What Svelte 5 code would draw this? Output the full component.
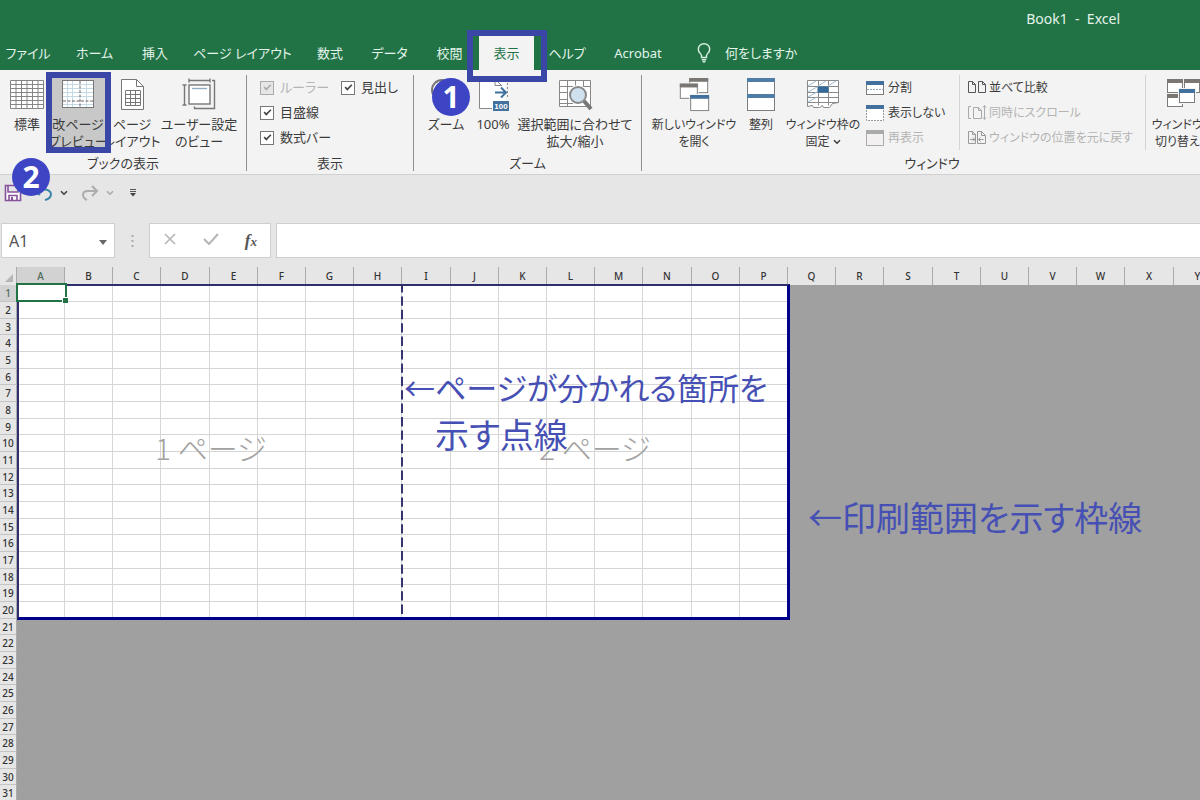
<script>
  const tabs = ['ファイル', 'ホーム', '挿入', 'ページ レイアウト', '数式', 'データ', '校閲', '表示', 'ヘルプ', 'Acrobat'];
  const columns = 'ABCDEFGHIJKLMNOPQRSTUVWXY'.split('');
  const rows = Array.from({ length: 31 }, (_, i) => i + 1);
  let active = $state('表示');
</script>

{#snippet win(x, y, w, h, bar)}
  <rect x={x + 0.5} y={y + 0.5} width={w - 1} height={h - 1} fill="#fff" stroke="#7c7c7c" />
  <rect {x} {y} width={w} height="4" fill={bar} />
{/snippet}

{#snippet chevron()}
  <svg class="chevron" width="8" height="6" viewBox="0 0 8 6" aria-hidden="true"><path d="M1 1.2 4 4.2 7 1.2" fill="none" stroke="currentColor" stroke-width="1.5" /></svg>
{/snippet}

<div class="excel">
  <header>
    <div class="title">Book1&nbsp; -&nbsp; Excel</div>
    <nav>
      {#each tabs as tab}
        <button class:active={tab === active} onclick={() => (active = tab)}>{tab}</button>
      {/each}
      <button class="tell">
        <svg width="14" height="20" viewBox="0 0 14 20" fill="none" stroke="#d9f0e2" stroke-width="1.4" aria-hidden="true">
          <path d="M4.5 14.5V12.6C4.5 10.8 1.3 9.500 1.3 6.400a5.700 5.700 0 0 1 11.400 0c0 3.100-3.200 4.400-3.200 6.200v1.900zM4.800 16.800h4.400M5.600 18.800h2.800" />
        </svg>
        何をしますか
      </button>
    </nav>
    <div class="mark tab-mark"></div>
  </header>

  <section class="ribbon">
    <div class="group book">
      <div class="tools">
        <button>
          <svg width="34" height="34" viewBox="0 0 34 34" aria-hidden="true">
            <rect x="1" y="2.500" width="32" height="28" fill="#fff" />
            <path d="M.5 2.500h33v28H.5zM6 2.500v28M11.500 2.500v28M17 2.500v28M22.500 2.500v28M28 2.500v28M.5 6.500h33M.5 10.500h33M.5 14.500h33M.5 18.500h33M.5 22.500h33M.5 26.500h33" fill="none" stroke="#858585" />
          </svg>
          <span>標準</span>
        </button>
        <button class="on">
          <svg width="34" height="34" viewBox="0 0 34 34" aria-hidden="true">
            <rect x="1.500" y="2.500" width="31" height="27" fill="#fff" />
            <path d="M6.500 3v26M11.500 3v26M25.500 3v26M2 6.500h30M2 10.500h30M2 14.500h30M2 18.500h30M2 26.500h30" fill="none" stroke="#c3d9e6" />
            <rect x="1.500" y="2.500" width="31" height="27" fill="none" stroke="#777" />
            <path d="M19 3v27M2 23h31" fill="none" stroke="#666" stroke-dasharray="3 1.500" />
          </svg>
          <span>改ページ<br />プレビュー</span>
        </button>
        <button>
          <svg width="34" height="34" viewBox="0 0 34 34" fill="none" stroke="#777" aria-hidden="true">
            <path d="M6.500 1.500h15l7 7v23h-22z" fill="#fff" />
            <path d="M21.500 1.500v7h7M10.500 12.500h15v15h-15zM15.500 12.500v15M20.500 12.500v15M10.500 16.500h15M10.500 20.500h15M10.500 24.500h15" />
          </svg>
          <span>ページ<br />レイアウト</span>
        </button>
        <button>
          <svg width="34" height="34" viewBox="0 0 34 34" fill="none" stroke="#777" stroke-width="1.400" aria-hidden="true">
            <path d="M7 2.500h21M7 .5v4M28 .5v4M2.500 7v20M.5 7h4M.5 27h4M30 2.500h2.500v28h-20V28.500" />
            <rect x="7" y="7" width="21" height="19" fill="#fff" />
            <path d="M10 10.500h15" stroke="#91acc0" />
          </svg>
          <span>ユーザー設定<br />のビュー</span>
        </button>
      </div>
      <div class="caption">ブックの表示</div>
      <div class="mark tool-mark"></div>
      <div class="badge second">2</div>
    </div>

    <div class="group show">
      <div class="checks">
        <label class="off"><input type="checkbox" checked disabled />ルーラー</label>
        <label><input type="checkbox" checked />見出し</label>
        <label><input type="checkbox" checked />目盛線</label>
        <label class="next"><input type="checkbox" checked />数式バー</label>
      </div>
      <div class="caption">表示</div>
    </div>

    <div class="group zoom">
      <div class="tools">
        <button>
          <svg width="34" height="34" viewBox="0 0 34 34" fill="none" aria-hidden="true">
            <circle cx="13" cy="12" r="10" fill="#fff" stroke="#777" stroke-width="2" /><path d="m20 19 7 9" stroke="#777" stroke-width="3" />
          </svg>
          <span>ズーム</span>
        </button>
        <button>
          <svg width="34" height="34" viewBox="0 0 34 34" fill="none" aria-hidden="true">
            <path d="M3.500 1.500h26v29h-26z" fill="#fff" />
            <path d="M3.500 1v29.500H16M19 1.500v6h7M20 2l5 5" stroke="#888" />
            <path d="M31.500 1v19" stroke="#888" stroke-dasharray="2 2" />
            <path d="M19 14.500h10M25 9.500l5 5-5 5" stroke="#3f719d" stroke-width="2" />
            <rect x="17" y="23" width="16" height="10" fill="#41719c" />
            <text x="25" y="31" text-anchor="middle" class="tiny">100</text>
          </svg>
          <span>100%</span>
        </button>
        <button>
          <svg width="36" height="34" viewBox="0 0 36 34" fill="none" aria-hidden="true">
            <path d="M2.500 2.500h31v26h-31z" fill="#fff" />
            <path d="M2.500 2.500h31v26h-31zM10.500 2.500v26M18.500 2.500v6M26.500 2.500v6M2.500 8.500h31M2.500 14.500h8M2.500 21.500h8M2.500 25.500h14" stroke="#888" />
            <circle cx="21" cy="17" r="10" fill="#fff" />
            <path d="m27 23 7 8" stroke="#777" stroke-width="4" />
            <circle cx="21" cy="17" r="8" fill="#cfe0ef" stroke="#888" stroke-width="2" />
          </svg>
          <span>選択範囲に合わせて<br />拡大/縮小</span>
        </button>
      </div>
      <div class="caption">ズーム</div>
      <div class="badge first">1</div>
    </div>

    <div class="group window">
      <div class="tools">
        <button>
          <svg width="34" height="36" viewBox="0 0 34 36" aria-hidden="true">
            {@render win(12, 0, 20, 16, '#7a7672')}
            <rect x="1" y="5" width="21" height="18" fill="#f3f3f3" />
            {@render win(2, 6, 19, 16, '#7a7672')}
            <rect x="12" y="17" width="22" height="19" fill="#f3f3f3" />
            {@render win(13, 18, 20, 17, '#41719c')}
          </svg>
          <span>新しいウィンドウ<br />を開く</span>
        </button>
        <button>
          <svg width="28" height="34" viewBox="0 0 28 34" aria-hidden="true">
            {@render win(0, 0, 28, 17, '#4f7da8')}
            {@render win(0, 16, 28, 17, '#4f7da8')}
          </svg>
          <span>整列</span>
        </button>
        <button>
          <svg width="34" height="34" viewBox="0 0 34 34" fill="none" stroke="#8a8a8a" aria-hidden="true">
            <path d="M1.500 2.500h31v22l-6 1-3 4h-6l-1-2-3 2h-6l-1-2-5 1z" fill="#fff" />
            <path d="M12.500 2.500v25M22.500 2.500v25M1.500 8.500h31M1.500 14.500h31M1.500 19.500h31M1.500 24.500h31" />
            <path d="m2 8 8-5M12 8l8-5M22 8l8-5M2 14l9-5M2 19l9-5M2 24l9-5" stroke="#9dbad1" />
            <path d="M12 9h10v5H12z" fill="#356a9b" stroke="#356a9b" />
          </svg>
          <span>ウィンドウ枠の<br />固定 {@render chevron()}</span>
        </button>
        <div class="list panes">
          <button>
            <svg width="18" height="16" viewBox="0 0 18 16" aria-hidden="true">{@render win(0, 1, 18, 14, '#41719c')}<path d="M1 9.500h16" stroke="#8fabc3" stroke-dasharray="2 1" /></svg>分割
          </button>
          <button>
            <svg width="18" height="16" viewBox="0 0 18 16" aria-hidden="true"><path d="M.5 2v13.500h17V2" fill="#fff" stroke="#999" stroke-dasharray="2 1" /><path d="M0 0h18v4H0z" fill="#41719c" /></svg>表示しない
          </button>
          <button disabled>
            <svg width="18" height="16" viewBox="0 0 18 16" aria-hidden="true"><path d="M.5 1.500h17v14H.5z" fill="#f3f0f1" stroke="#aaa" /><path d="M0 0h18v4H0z" fill="#aaa" /></svg>再表示
          </button>
        </div>
        <div class="list compare">
          <button>
            <svg width="20" height="16" viewBox="0 0 20 16" fill="none" stroke="#555" aria-hidden="true"><path d="M3 1.500H1.500v11h7v-8l-3-3H3M5.500 1.500v3h3M11.500 1.500h4l3 3v8h-7zM15.500 1.500v3h3" /></svg>並べて比較
          </button>
          <button disabled>
            <svg width="20" height="16" viewBox="0 0 20 16" fill="none" stroke="#aaa" aria-hidden="true"><path d="M4 1.500H1.500v12H4M6.500 2.500h5l3 3v8h-8zM11.500 2.500v3h3M17.500 1v13M16 2.500l1.500-2 1.500 2M16 12.500l1.500 2 1.500-2" /></svg>同時にスクロール
          </button>
          <button disabled>
            <svg width="20" height="16" viewBox="0 0 20 16" fill="none" stroke="#999" aria-hidden="true"><path d="M1.500 1.500h4l3 3v9h-7zM5.500 1.500v3h3M10.500 1.500h4l4 4v8h-8zM14.500 1.500v4h4M3 9.500h5M6 7.500l2 2-2 2M11.500 9.500h5M13.500 7.500l-2 2 2 2" /></svg>ウィンドウの位置を元に戻す
          </button>
        </div>
        <button>
          <svg width="34" height="34" viewBox="0 0 34 34" aria-hidden="true">
            {@render win(1, 1, 16, 14, '#7a7672')}
            {@render win(18, 1, 16, 14, '#7a7672')}
            {@render win(1, 16, 16, 13, '#7a7672')}
            <rect x="12" y="10" width="18" height="16" fill="#f3f3f3" />
            {@render win(13, 11, 16, 14, '#41719c')}
          </svg>
          <span>ウィンドウの<br />切り替え {@render chevron()}</span>
        </button>
      </div>
      <div class="caption">ウィンドウ</div>
    </div>
  </section>

  <div class="quick">
    <button aria-label="上書き保存">
      <svg width="18" height="18" viewBox="0 0 18 18" fill="none" stroke="#86519c" stroke-width="1.600" aria-hidden="true"><path d="M1.500 1.500h15v15h-15zM4 1.500v6.500h10V1.500M5 16.500v-5h8v5" fill="#fff" /><path d="M7 13h2v3H7z" fill="#86519c" stroke="none" /></svg>
    </button>
    <button class="undo" aria-label="元に戻す">
      <svg width="20" height="16" viewBox="0 0 20 16" fill="none" stroke="#3985a8" stroke-width="2" aria-hidden="true"><path d="M6 1 2 6l5 4M2 6c8-3 15-2 16 3 0 3-2 5-6 6" /></svg>
      {@render chevron()}
    </button>
    <button class="redo" aria-label="やり直し">
      <svg width="18" height="16" viewBox="0 0 18 16" fill="none" stroke="#adadad" stroke-width="2" aria-hidden="true"><path d="m11 1 5 5-5 5M16 6H7c-4 0-5 2-5 4 0 3 2 4 4 5" /></svg>
      {@render chevron()}
    </button>
    <button aria-label="カスタマイズ">
      <svg width="8" height="8" viewBox="0 0 8 8" aria-hidden="true"><path d="M1 .5h6M1 2.500h6" stroke="#555" /><path d="M1 4h6L4 7.500z" fill="#444" /></svg>
    </button>
  </div>

  <div class="formula">
    <div class="name">
      <input value="A1" aria-label="名前ボックス" />
      <button aria-label="名前の一覧"><svg width="8" height="5" viewBox="0 0 8 5"><path d="M0 0h8L4 5z" fill="#666" /></svg></button>
    </div>
    <svg class="grip" width="3" height="14" viewBox="0 0 3 14" aria-hidden="true"><path d="M.5 1h2v2h-2zM.5 6h2v2h-2zM.5 11h2v2h-2z" fill="#aaa" /></svg>
    <div class="actions">
      <button aria-label="キャンセル"><svg width="14" height="12" viewBox="0 0 14 12"><path d="m2 1 10 10M12 1 2 11" stroke="#b5b5b5" stroke-width="1.600" /></svg></button>
      <button aria-label="入力"><svg width="16" height="12" viewBox="0 0 16 12"><path d="m1 6 5 5 9-10" fill="none" stroke="#b5b5b5" stroke-width="2" /></svg></button>
      <button class="fx" aria-label="関数の挿入">f<small>x</small></button>
    </div>
    <input class="entry" aria-label="数式バー" />
  </div>

  <main>
    <table>
      <thead>
        <tr>
          <th class="corner"><svg width="8" height="8" viewBox="0 0 8 8" aria-hidden="true"><path d="M8 0v8H0z" fill="#b5b5b5" /></svg></th>
          {#each columns as column}<th class:picked={column === 'A'}>{column}</th>{/each}
        </tr>
      </thead>
      <tbody>
        {#each rows as row}
          <tr>
            <th class:picked={row === 1}>{row}</th>
            {#each columns as _, c}<td class:inside={c < 16 && row <= 20}></td>{/each}
          </tr>
        {/each}
      </tbody>
    </table>

    <div class="print-area">
      <div class="page"><span>1</span> ページ</div>
      <div class="page"><span class="tucked">2</span> ページ</div>
      <svg class="break" width="2" height="332" aria-hidden="true"><path d="M1 0v332" stroke="#35356f" stroke-width="2" stroke-dasharray="9.400 4" stroke-dashoffset="3" /></svg>
    </div>
    <div class="cursor"></div>
    <p class="note split-note">←ページが分かれる箇所を<br /><span>示す点線</span></p>
    <p class="note frame-note">←印刷範囲を示す枠線</p>
  </main>
</div>

<style>
  :global(body) { margin: 0; }
  .excel {
    height: 100vh;
    overflow: hidden;
    display: flex;
    flex-direction: column;
    background: #e6e6e6;
    color: #3b3b3b;
    font: 13px/17px "Noto Sans", "Noto Sans CJK JP", sans-serif;
    font-feature-settings: "palt";
  }
  button, input { font: inherit; color: inherit; font-feature-settings: inherit; }
  button { border: 0; padding: 0; background: none; white-space: nowrap; }
  svg { flex: none; }

  header { position: relative; background: #217346; color: #e3f4ea; }
  .title { height: 36px; font-size: 14px; line-height: 37px; padding-right: 80px; text-align: right; }
  nav {
    display: grid;
    grid-template-columns: 56px 77px 44px 131px 44px 75px 45px 62px 66px 76px 140px;
    height: 34px;
  }
  nav .active { margin: 0 0 0 7px; background: #f3f3f3; color: #217346; }
  .tell { display: flex; align-items: center; gap: 14px; padding-left: 21px; }

  .mark { position: absolute; z-index: 2; box-sizing: border-box; border: 6px solid #3b47a6; }
  .tab-mark { left: 467px; top: 30px; width: 80px; height: 52px; }
  .tool-mark { left: 46px; top: -3px; width: 65px; height: 81px; }
  .badge {
    position: absolute; z-index: 3; width: 38px; height: 38px; border-radius: 50%;
    background: #3d45c4; color: #fff; font-size: 30px; font-weight: 700; line-height: 38px; text-align: center;
  }
  .first { left: 18px; top: 3px; }
  .second { left: 12px; top: 83px; }

  .ribbon { display: flex; height: 96px; padding: 5px 0 3px; background: #f3f3f3; border-bottom: 1px solid #d0d0d0; }
  .group { position: relative; box-sizing: border-box; flex: none; display: flex; flex-direction: column; border-right: 1px solid #8f8f8f; }
  .caption { line-height: 16px; text-align: center; }
  .tools { flex: 1; display: grid; }
  .tools > button { display: flex; flex-direction: column; align-items: center; gap: 4px; padding-top: 3px; }
  .tools > button > svg { height: 34px; }
  .tools > button > span { text-align: center; }
  .book { width: 247px; }
  .book .tools { grid-template-columns: 46px 56px 52px 82px; padding-left: 4px; }
  .tools > .on { margin-bottom: 4px; background: #c8c8c8; }
  .show { width: 167px; }
  .zoom { width: 228px; }
  .zoom .tools { grid-template-columns: 48px 46px 118px; padding-left: 8px; }
  .window { width: 580px; border: 0; }
  .window .tools { grid-template-columns: 92px 42px 82px 96px 186px 74px; padding-left: 6px; font-size: 12px; }
  .chevron { vertical-align: 1px; }
  .tiny { font: 700 8px "Liberation Sans", sans-serif; fill: #fff; }

  .checks { flex: 1; display: grid; grid-template-columns: 81px 60px; grid-auto-rows: 25px; padding-left: 13px; }
  .checks label { display: flex; align-items: center; gap: 6px; white-space: nowrap; }
  .checks .next { grid-column: 1; }
  .checks .off { color: #b5b5b5; }
  .checks input { appearance: none; box-sizing: border-box; width: 14px; height: 14px; margin: 0; border: 1px solid #777; background: #fff; display: grid; place-items: center; }
  .checks input:checked::before { content: ""; width: 7px; height: 3px; margin-bottom: 3px; border: solid #444; border-width: 0 0 2px 2px; box-sizing: content-box; rotate: -45deg; scale: 0.8; }
  .checks input:disabled { border-color: #aaa; background: #e6e6e6; }
  .checks input:disabled::before { border-color: #aaa; }

  .list { display: grid; grid-template-rows: repeat(3, 25px); margin-bottom: auto; border-right: 1px solid #d4d4d4; }
  .list button { display: flex; align-items: center; gap: 4px; }
  .list button:disabled { color: #b3b3b3; }
  .panes { padding-left: 2px; }
  .compare { padding-left: 7px; }
  .compare button { gap: 2px; }

  .quick { display: flex; align-items: center; height: 36px; padding: 0 4px 12px; }
  .quick button { display: flex; align-items: center; gap: 7px; }
  .undo { margin-left: 11px; }
  .redo { margin-left: 13px; color: #aaa; }
  .redo + button { margin-left: 15px; }

  .formula { display: flex; align-items: stretch; height: 35px; padding-left: 1px; }
  .name, .actions, .entry { box-sizing: border-box; border: 1px solid #cfcfcf; background: #fff; }
  .name { display: flex; width: 114px; padding: 0 7px; }
  .name input { flex: 1; min-width: 0; padding: 2px 0 0; border: 0; outline: 0; font-size: 16px; color: #555; }
  .grip { align-self: center; margin: 0 15px 0 16px; }
  .actions { display: flex; align-items: center; justify-content: space-around; width: 122px; margin-right: 5px; }
  .fx { font: italic 700 17px "Liberation Serif", serif; color: #555; }
  .fx small { font-size: 13px; }
  .entry { flex: 1; border-right: 0; }

  main { position: relative; flex: 1; min-height: 0; margin-top: 9px; overflow: hidden; background: #a0a0a0; }
  table { table-layout: fixed; width: 1222px; border-spacing: 0; }
  th, td { box-sizing: border-box; padding: 0; }
  th { font-size: 10px; line-height: 14px; font-weight: 500; color: #333; background: #e6e6e6; border-right: 1px solid #ababab; }
  thead th { width: 48px; height: 18px; }
  thead th:nth-child(5n) { width: 49px; }
  thead .corner { width: 17px; text-align: right; padding: 4px 3px 0 0; line-height: 8px; }
  thead .picked { background: #d2d2d2; color: #4f6b5a; }
  tbody tr { height: 17px; }
  tbody tr:nth-child(3n) { height: 16px; }
  tbody th { border-bottom: 1px solid #c4c4c4; }
  tbody .picked { background: #d2d2d2; color: #4f6b5a; }
  .inside { background: #fff; border: solid #d6d6d6; border-width: 0 1px 1px 0; }

  .print-area {
    position: absolute; left: 17px; top: 17px; box-sizing: border-box; width: 773px; height: 336px;
    display: grid; grid-template-columns: 1fr 1fr; align-items: center;
    border: solid #00008b; border-width: 2px 3px 3px 2px; border-top-color: #2f2f6b; border-left-color: #2f2f6b;
  }
  .page { padding-bottom: 10px; text-align: center; font: 300 30px/40px "Noto Sans CJK JP", sans-serif; font-feature-settings: normal; color: #a2a2a2; }
  .page span { display: inline-block; }
  .tucked { clip-path: inset(24px 0 0 0); }
  .break { position: absolute; left: 382px; top: 0; }
  .cursor { position: absolute; left: 16px; top: 16px; box-sizing: border-box; width: 51px; height: 19px; border: 2px solid #217346; background: #fff; }
  .cursor::after { content: ""; position: absolute; right: -3px; bottom: -3px; width: 5px; height: 5px; background: #217346; border: solid #fff; border-width: 1px 0 0 1px; }
  .note { position: absolute; margin: 0; white-space: nowrap; font: 34px/47px "Noto Sans CJK JP", sans-serif; font-feature-settings: "palt"; color: #4650b4; }
  .split-note { left: 404px; top: 96px; font-size: 31px; }
  .split-note span { padding-left: 31px; font-size: 34px; }
  .frame-note { left: 808px; top: 226px; }
</style>
